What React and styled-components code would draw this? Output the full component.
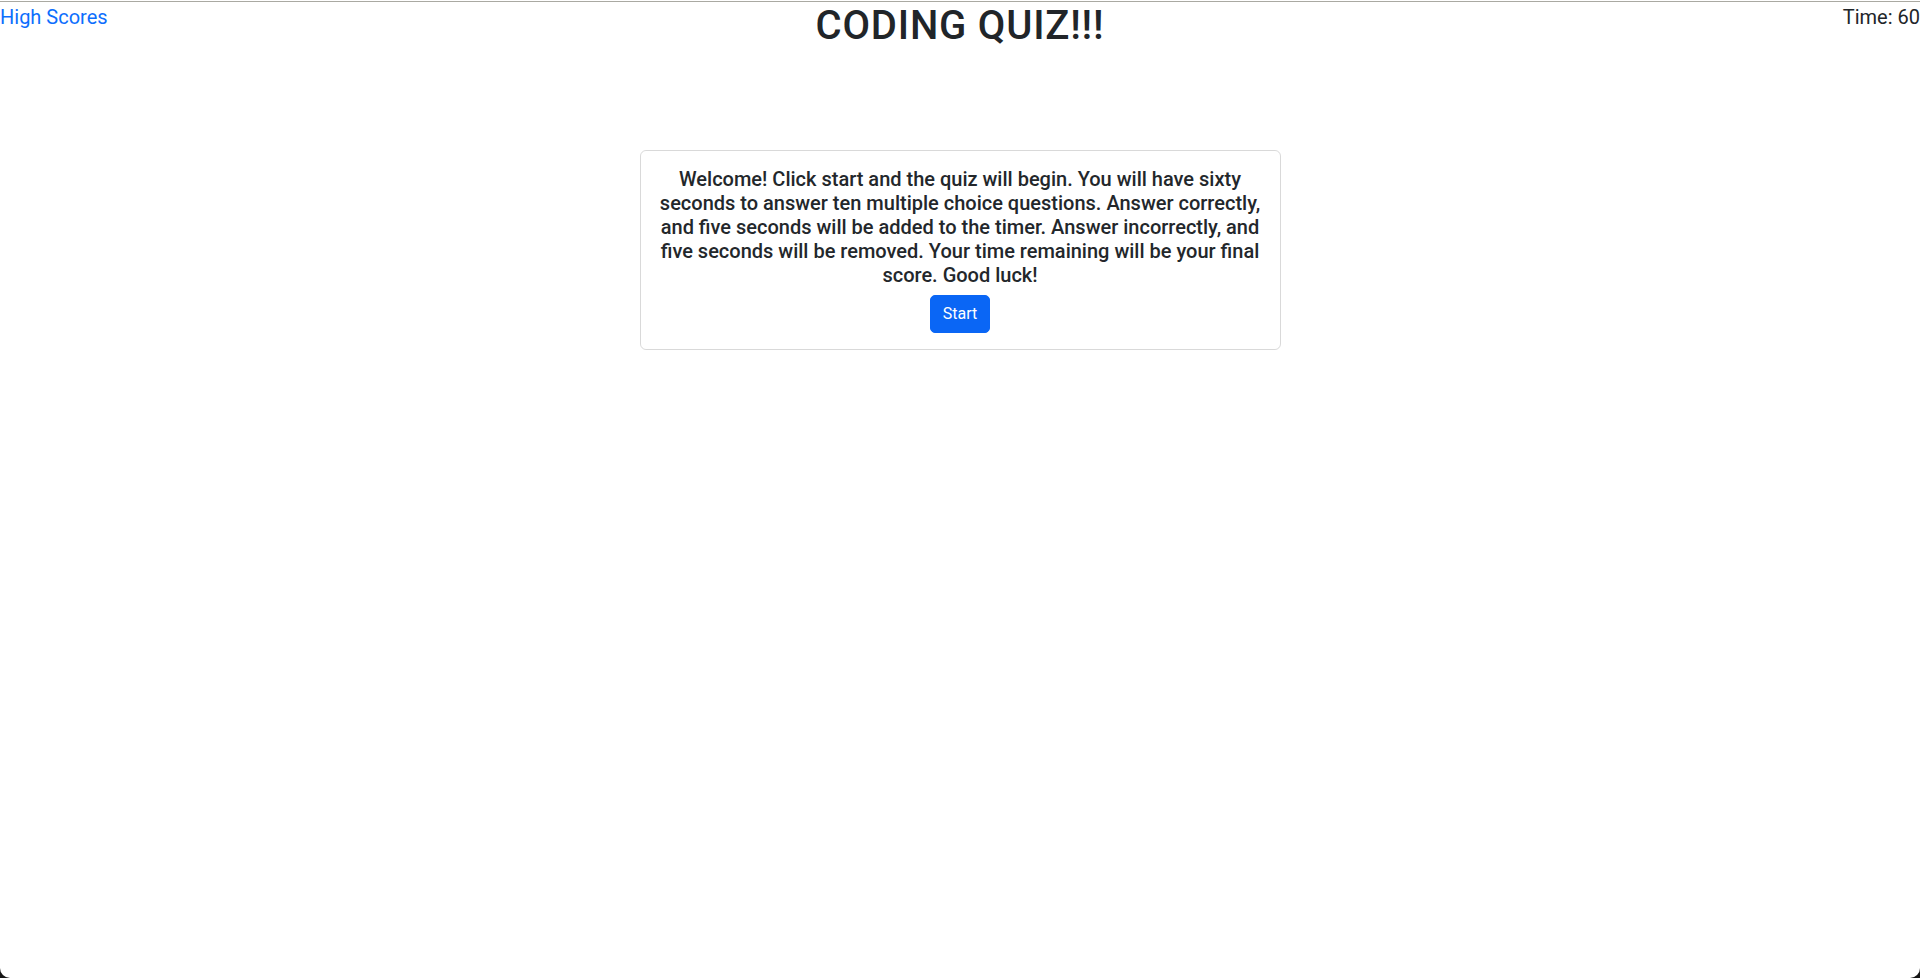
import React from "react";
import styled, { createGlobalStyle } from "styled-components";

const Global = createGlobalStyle`
  html, body { margin: 0; padding: 0; background: #161616; }
  body {
    font-family: Roboto, "Noto Sans", "Liberation Sans", sans-serif;
    color: #212529;
    font-size: 16px;
    line-height: 1.5;
  }
  * { box-sizing: border-box; }
`;

const Frame = styled.div`
  height: 100vh;
  background: #fff;
  border-radius: 0 0 10px 10px;
  padding-top: 1px;
  overflow: hidden;
`;

const TopRule = styled.div`
  height: 1px;
  background: #aaa9a2;
`;

const Header = styled.header`
  display: grid;
  grid-template-columns: 1fr auto 1fr;
  align-items: start;
`;

const NavLink = styled.a`
  justify-self: start;
  font-size: 20px;
  line-height: 30px;
  color: #0d6efd;
  text-decoration: none;
  cursor: pointer;
`;

const Title = styled.h1`
  margin: 0;
  font-size: 40px;
  line-height: 48px;
  font-weight: 500;
  letter-spacing: 0.8px;
  color: #212529;
`;

const Timer = styled.div`
  justify-self: end;
  font-size: 20px;
  line-height: 30px;
  color: #212529;
`;

const Card = styled.section`
  width: 641px;
  margin: 100px auto 0;
  border: 1px solid rgba(0, 0, 0, 0.15);
  border-radius: 6px;
  padding: 16px;
  text-align: center;
`;

const Intro = styled.h5`
  margin: 0 0 8px;
  font-size: 20px;
  line-height: 24px;
  font-weight: 500;
  color: #23272b;
`;

const Button = styled.button`
  font-family: inherit;
  font-size: 16px;
  line-height: 24px;
  padding: 6px 12px;
  border: 1px solid #0a66f5;
  border-radius: 5px;
  background: #0a66f5;
  color: #fff;
  cursor: pointer;
`;

export default function App() {
  return (
    <>
      <Global />
      <Frame>
        <TopRule />
        <Header>
          <NavLink>High Scores</NavLink>
          <Title>CODING QUIZ!!!</Title>
          <Timer>Time: 60</Timer>
        </Header>
        <Card>
          <Intro>
            Welcome! Click start and the quiz will begin. You will have sixty
            seconds to answer ten multiple choice questions. Answer correctly,
            and five seconds will be added to the timer. Answer incorrectly, and
            five seconds will be removed. Your time remaining will be your final
            score. Good luck!
          </Intro>
          <Button>Start</Button>
        </Card>
      </Frame>
    </>
  );
}
